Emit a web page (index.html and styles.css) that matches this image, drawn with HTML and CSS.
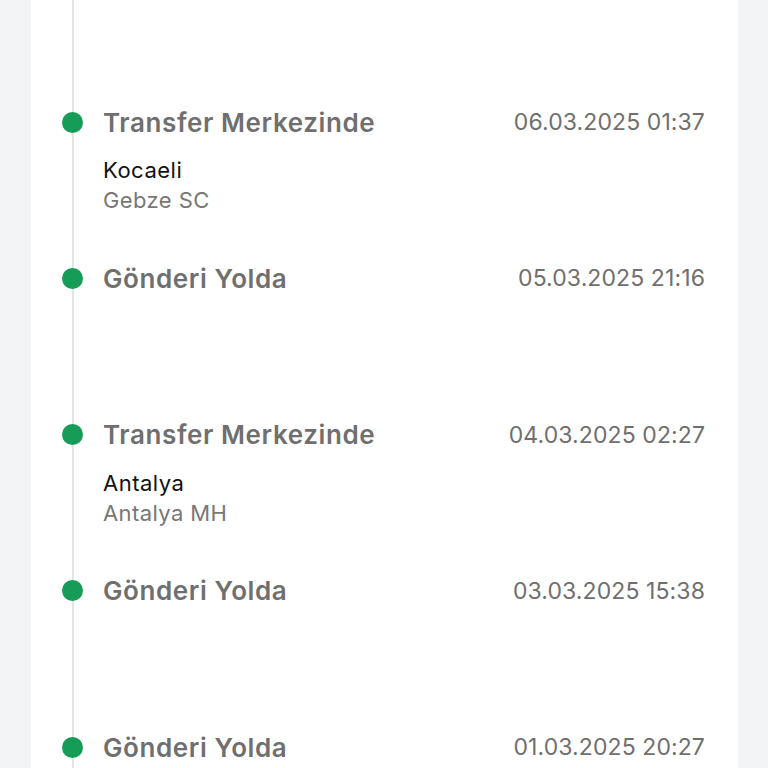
FILE: index.html
```html
<!DOCTYPE html>
<html lang="tr">
<head>
  <meta charset="UTF-8" />
  <meta name="viewport" content="width=device-width, initial-scale=1.0"/>
  <title>Gönderi Takibi</title>
  <link rel="stylesheet" href="styles.css">
</head>
<body>
  <div class="card">
    <ul class="timeline">
      <li class="event">
        <div class="event-head">
          <span class="event-title">Transfer Merkezinde</span>
          <span class="event-date">06.03.2025 01:37</span>
        </div>
        <div class="event-city">Kocaeli</div>
        <div class="event-branch">Gebze SC</div>
      </li>
      <li class="event">
        <div class="event-head">
          <span class="event-title">Gönderi Yolda</span>
          <span class="event-date">05.03.2025 21:16</span>
        </div>
      </li>
      <li class="event">
        <div class="event-head">
          <span class="event-title">Transfer Merkezinde</span>
          <span class="event-date">04.03.2025 02:27</span>
        </div>
        <div class="event-city">Antalya</div>
        <div class="event-branch">Antalya MH</div>
      </li>
      <li class="event">
        <div class="event-head">
          <span class="event-title">Gönderi Yolda</span>
          <span class="event-date">03.03.2025 15:38</span>
        </div>
      </li>
      <li class="event">
        <div class="event-head">
          <span class="event-title">Gönderi Yolda</span>
          <span class="event-date">01.03.2025 20:27</span>
        </div>
      </li>
    </ul>
  </div>
</body>
</html>
```

FILE: styles.css
```css
html, body {
  margin: 0;
  height: 100%;
  overflow: hidden;
}

body {
  font-family: "Inter", "Noto Sans", sans-serif;
  background: #f3f4f6;
  color: #111;
}

.card {
  margin-left: 31px;
  width: 707px;
  min-height: 100%;
  background: #fff;
}

.timeline {
  position: relative;
  list-style: none;
  margin: 0;
  padding: 107px 33px 0 72px;
}

.timeline::before {
  content: "";
  position: absolute;
  left: 41px;
  top: 0;
  bottom: 0;
  width: 2px;
  background: #e3e4e6;
}

.event {
  position: relative;
  height: 156.3px;
}

.event::before {
  content: "";
  position: absolute;
  left: -41px;
  top: 4.5px;
  width: 21px;
  height: 21px;
  border-radius: 50%;
  background: #179c58;
}

.event-head {
  display: flex;
  justify-content: space-between;
  align-items: center;
  height: 30px;
}

.event-title {
  font-size: 26px;
  font-weight: 600;
  letter-spacing: 0.6px;
  color: #6f6f6f;
}

.event-date {
  font-size: 23px;
  letter-spacing: 0.1px;
  color: #6f6f6f;
}

.event-city {
  margin-top: 19px;
  font-size: 22px;
  letter-spacing: 0.5px;
  line-height: 29px;
  color: #111;
}

.event-branch {
  font-size: 22px;
  letter-spacing: 0.4px;
  line-height: 31px;
  color: #777;
}
```
